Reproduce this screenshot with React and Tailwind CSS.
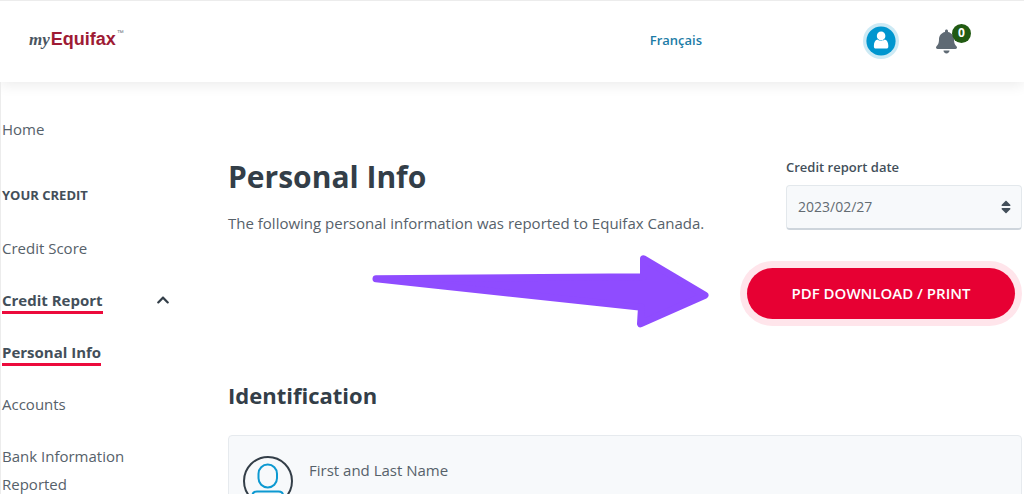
import { useState } from 'react';
import { FaBell, FaChevronUp, FaSort } from 'react-icons/fa';

const activeLink = 'font-bold shadow-[inset_0_-3px_0_#ec0b3c]';

const reportLinks = [
  { label: 'Personal Info', active: true },
  { label: 'Accounts' },
  { label: 'Bank Information Reported' }
];

function Logo() {
  return (
    <a href="#home" className="flex items-baseline gap-px pb-1">
      <span className="font-['Liberation_Serif'] text-[17px] leading-6 font-bold italic text-[#4a5560]">my</span>
      <span className="font-['Liberation_Sans'] text-lg leading-6 font-bold text-[#9e1b34]">Equifax</span>
      <span className="self-start font-['Liberation_Sans'] text-[7px] leading-3 text-[#6b747c]">™</span>
    </a>
  );
}

function Avatar() {
  return (
    <svg viewBox="0 0 36 36" className="size-9">
      <circle cx="18" cy="18" r="18" fill="#cceaf5" />
      <circle cx="18" cy="18" r="14.6" fill="#0096cf" />
      <path
        d="M14.4 16.6C12 17.4 10.9 19.6 10.9 22.6V23.8C10.9 25 11.6 25.6 12.8 25.6H23.4C24.6 25.6 25.3 25 25.3 23.8V22.6C25.3 19.6 24.2 17.4 21.8 16.6C19.8 18.2 16.4 18.2 14.4 16.6Z"
        fill="#fff"
      />
      <circle cx="18.1" cy="12.9" r="4.3" fill="#fff" />
    </svg>
  );
}

function Header() {
  return (
    <header className="flex h-[82px] items-center border-t border-[#ececec] pr-[53px] pb-px pl-[29px] shadow-[0_2px_14px_rgba(0,0,0,0.09)]">
      <Logo />
      <a href="#fr" className="mr-[161px] ml-auto text-[13px] font-semibold text-[#1c7ca6]">
        Français
      </a>
      <button type="button" aria-label="Account">
        <Avatar />
      </button>
      <button type="button" aria-label="Notifications" className="relative ml-[37px] pr-[14px]">
        <FaBell className="h-[25px] w-[21px] text-[#5f6a74]" />
        <span className="absolute -top-[5px] right-0 flex size-[19px] items-center justify-center rounded-full bg-[#215a12] text-[12px] leading-none font-bold text-white">
          0
        </span>
      </button>
    </header>
  );
}

function Sidebar() {
  const [open, setOpen] = useState(true);

  return (
    <nav className="w-[170px] shrink-0 border-l border-[#ececec] pt-[33px] pl-px text-[15px] leading-7 text-[#56616a]">
      <a href="#home">Home</a>
      <h2 className="mt-[38px] text-[13px] leading-7 font-bold text-[#434f5a]">YOUR CREDIT</h2>
      <ul className="mt-[25px] flex flex-col gap-6">
        <li className="flex">
          <a href="#score">Credit Score</a>
        </li>
        <li className="flex items-center justify-between text-[#434f5a]">
          <a href="#report" className={activeLink}>Credit Report</a>
          <button type="button" aria-label="Toggle credit report" aria-expanded={open} onClick={() => setOpen(!open)}>
            <FaChevronUp className="size-[14px] text-[#333e48]" />
          </button>
        </li>
        {open && reportLinks.map(link => (
          <li key={link.label} className="flex">
            <a href="#section" className={link.active ? `${activeLink} text-[#434f5a]` : ''}>{link.label}</a>
          </li>
        ))}
      </ul>
    </nav>
  );
}

function ReportDate() {
  const [date, setDate] = useState('2023/02/27');

  return (
    <div className="w-[236px] shrink-0">
      <label htmlFor="report-date" className="block text-[13px] leading-5 font-semibold text-[#434f5a]">
        Credit report date
      </label>
      <div className="relative mt-2">
        <select
          id="report-date"
          value={date}
          onChange={e => setDate(e.target.value)}
          className="h-[45px] w-full appearance-none rounded-sm border border-b-2 border-[#e3e8ec] border-b-[#ced5dc] bg-[#f7f9fb] px-[11px] text-sm text-[#636b72]"
        >
          <option>2023/02/27</option>
        </select>
        <FaSort className="pointer-events-none absolute top-[14px] right-2 size-4 text-[#434f5a]" />
      </div>
    </div>
  );
}

function Arrow() {
  return (
    <svg viewBox="0 0 338 80" className="h-20 w-[338px]">
      <path
        d="M4 25.5L271.5 23.5V5.5L333 42L268.5 70.5L269.5 54Z"
        transform="translate(0 .3)"
        fill="#8f4cff"
        stroke="#8f4cff"
        strokeWidth="7"
        strokeLinejoin="round"
      />
    </svg>
  );
}

function PersonIcon() {
  return (
    <svg viewBox="0 0 50 50" className="size-[50px] shrink-0" fill="none" strokeWidth="2">
      <circle cx="25" cy="25" r="24" stroke="#333e48" />
      <rect x="15.5" y="8.5" width="18.5" height="23" rx="9.2" stroke="#0d99d1" />
      <path d="M9.5 41V39.5C9.5 37 11.5 35.5 14 35.5H35.5C38 35.5 40 37 40 39.5V41" stroke="#0d99d1" />
    </svg>
  );
}

export default function App() {
  return (
    <div className="bg-white font-['Open_Sans',sans-serif]">
      <Header />
      <div className="flex gap-[58px] pr-0.5">
        <Sidebar />
        <main className="min-w-0 flex-1 pt-[75px]">
          <div className="flex justify-between gap-4">
            <div>
              <h1 className="text-3xl leading-10 font-bold text-[#333e48]">Personal Info</h1>
              <p className="mt-3 text-[15px] leading-7 text-[#56616a]">
                The following personal information was reported to Equifax Canada.
              </p>
            </div>
            <ReportDate />
          </div>

          <div className="mt-4 flex items-center justify-end gap-[37px] pr-[7px]">
            <Arrow />
            <button
              type="button"
              className="h-[51px] w-[268px] rounded-full bg-[#e70033] text-[15px] font-semibold text-white ring-[7px] ring-[#ffe5eb]"
            >
              PDF DOWNLOAD / PRINT
            </button>
          </div>

          <h2 className="mt-[46px] text-[22px] leading-8 font-bold text-[#333e48]">Identification</h2>
          <section className="mt-6 flex gap-4 rounded-sm border border-[#e6eaee] bg-[#f7f9fb] px-[14px] py-5">
            <PersonIcon />
            <h3 className="text-[15px] leading-7 text-[#56616a]">First and Last Name</h3>
          </section>
        </main>
      </div>
    </div>
  );
}
